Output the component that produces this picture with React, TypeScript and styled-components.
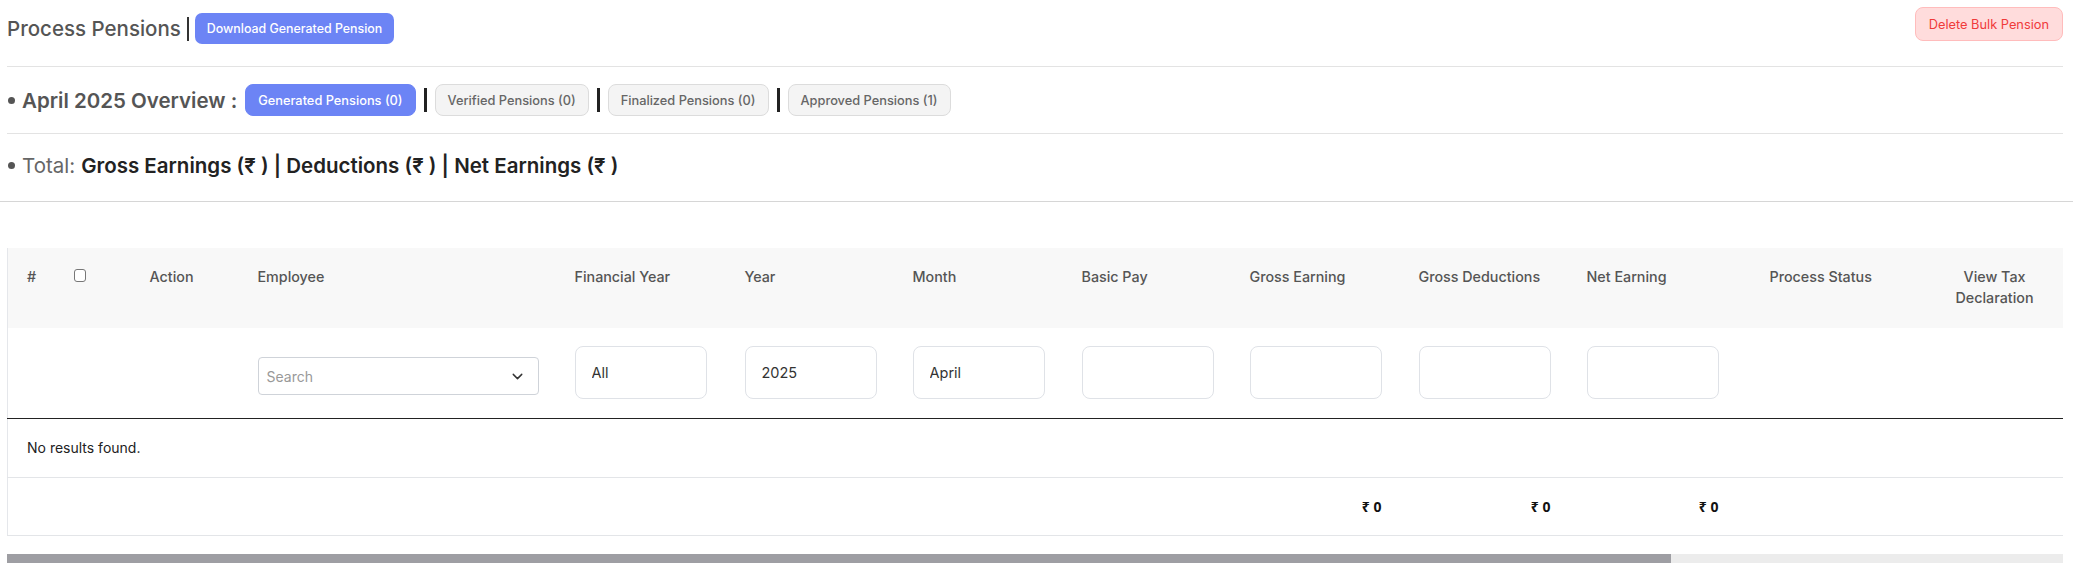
import React from "react";
import styled, { createGlobalStyle } from "styled-components";
import { ChevronDown } from "lucide-react";

const Global = createGlobalStyle`
  html, body { margin: 0; padding: 0; background: #fff; }
  body { font-family: Inter, "Noto Sans", "Liberation Sans", sans-serif; color: #222; }
  * { box-sizing: border-box; }
`;

const Page = styled.div`
  padding: 7px 10px 0 7px;
  overflow: hidden;
`;

const TopBar = styled.div`
  display: flex;
  justify-content: space-between;
  align-items: flex-start;
  height: 60px;
  border-bottom: 1px solid #e3e3e3;
`;

const TitleGroup = styled.div`
  display: flex;
  align-items: center;
  margin-top: 6px;
  gap: 6px;
`;

const Title = styled.h1`
  margin: 0;
  font-size: 20.5px;
  font-weight: 500;
  color: #555;
  line-height: 31px;
`;

const Bar = styled.span<{ $w: number; $h: number; $c: string }>`
  display: inline-block;
  width: ${(p) => p.$w}px;
  height: ${(p) => p.$h}px;
  background: ${(p) => p.$c};
  flex: none;
`;

const Dot = styled.span<{ $c: string }>`
  display: inline-block;
  width: 7px;
  height: 7px;
  border-radius: 50%;
  background: ${(p) => p.$c};
  margin: 0 7px 0 1px;
  flex: none;
`;

const PrimaryButton = styled.button<{ $h: number }>`
  height: ${(p) => p.$h}px;
  padding: 0 12px;
  border: none;
  border-radius: 7px;
  background: #6c84f5;
  color: #fff;
  font-family: Inter, "Noto Sans", sans-serif;
  font-size: 12.4px;
  font-weight: 500;
  white-space: nowrap;
`;

const DangerButton = styled.button`
  height: 34px;
  padding: 0 13px;
  border: 1px solid #ffbcbc;
  border-radius: 8px;
  background: #ffdcdc;
  color: #f03a3a;
  font-family: Inter, "Noto Sans", sans-serif;
  font-size: 12.8px;
  font-weight: 400;
`;

const OverviewRow = styled.div`
  display: flex;
  align-items: center;
  gap: 8px;
  height: 67px;
  border-bottom: 1px solid #e3e3e3;
`;

const SectionLabel = styled.span`
  display: inline-flex;
  align-items: center;
  font-size: 20.5px;
  font-weight: 600;
  color: #555;
  white-space: nowrap;
`;

const TabButton = styled.button<{ $active?: boolean }>`
  height: 32px;
  padding: 0 12px;
  border-radius: 8px;
  border: 1px solid ${(p) => (p.$active ? "#6c84f5" : "#dcdcdc")};
  background: ${(p) => (p.$active ? "#6c84f5" : "#f4f4f4")};
  color: ${(p) => (p.$active ? "#fff" : "#666")};
  font-family: Inter, "Noto Sans", sans-serif;
  font-size: 12.8px;
  font-weight: 500;
  white-space: nowrap;
`;

const TotalRow = styled.div`
  display: flex;
  align-items: center;
  height: 68px;
  margin: 0 -10px 0 -7px;
  padding: 0 0 4px 7px;
  border-bottom: 1px solid #d6d6d6;
  font-size: 20.5px;
  white-space: nowrap;
`;

const TotalLabel = styled.span`
  display: inline-flex;
  align-items: center;
  color: #666;
  font-weight: 400;
  margin-right: 6px;
`;

const TotalValue = styled.span`
  color: #222;
  font-weight: 600;
`;

const TableFrame = styled.div`
  margin-top: 46px;
  overflow: hidden;
`;

const Table = styled.table`
  width: 2540px;
  table-layout: fixed;
  border-collapse: collapse;
  border-left: 1px solid #e5e7eb;
`;

const ScrollTrack = styled.div`
  margin-top: 18px;
  height: 9px;
  background: #ececec;
`;

const ScrollThumb = styled.div`
  height: 100%;
  background: #9e9ea3;
`;

const HeadCell = styled.th<{ $center?: boolean }>`
  height: 80px;
  padding: 18px 19px 0;
  vertical-align: top;
  text-align: ${(p) => (p.$center ? "center" : "left")};
  background: #f8f8f8;
  font-size: 14.3px;
  line-height: 21px;
  font-weight: 500;
  color: #555;
`;

const FilterCell = styled.td`
  height: 90px;
  padding: 0 19px;
  vertical-align: middle;
  border-bottom: 1.5px solid #222;
`;

const FilterInput = styled.input`
  width: 132px;
  height: 53px;
  padding: 0 16px;
  border: 1px solid #dfe2e7;
  border-radius: 8px;
  font-family: Inter, "Noto Sans", sans-serif;
  font-size: 14.5px;
  color: #333;
  background: #fff;
  outline: none;
`;

const SelectBox = styled.div`
  width: 281px;
  height: 38px;
  margin-top: 7px;
  padding: 0 12px 0 8px;
  display: flex;
  align-items: center;
  justify-content: space-between;
  border: 1px solid #cfd3d9;
  border-radius: 4px;
  font-size: 14px;
  color: #999;
`;

const Checkbox = styled.span`
  display: inline-block;
  width: 12px;
  height: 13px;
  margin-top: 1px;
  border: 1.3px solid #777;
  border-radius: 3px;
  background: #fff;
`;

const MessageCell = styled.td`
  height: 59px;
  padding: 0 19px;
  font-size: 14px;
  color: #222;
  border-bottom: 1px solid #e3e5e8;
`;

const TotalCell = styled.td`
  height: 58px;
  padding: 0 19px;
  border-bottom: 1px solid #e3e5e8;
`;

const TotalAmount = styled.div`
  width: 132px;
  text-align: right;
  font-family: "Noto Sans", Inter, sans-serif;
  font-size: 14px;
  font-weight: 700;
  color: #111;
`;

const columns: { label: string; width: number; center?: boolean }[] = [
  { label: "#", width: 47 },
  { label: "", width: 76 },
  { label: "Action", width: 108 },
  { label: "Employee", width: 317 },
  { label: "Financial Year", width: 170 },
  { label: "Year", width: 168 },
  { label: "Month", width: 169 },
  { label: "Basic Pay", width: 168 },
  { label: "Gross Earning", width: 169 },
  { label: "Gross Deductions", width: 168 },
  { label: "Net Earning", width: 183 },
  { label: "Process Status", width: 175 },
  { label: "View Tax Declaration", width: 138, center: true },
  { label: "", width: 160 },
  { label: "", width: 160 },
  { label: "", width: 164 },
];

const filters: Record<number, string> = {
  4: "All",
  5: "2025",
  6: "April",
  7: "",
  8: "",
  9: "",
  10: "",
};

const totals: Record<number, string> = { 8: "₹ 0", 9: "₹ 0", 10: "₹ 0" };

const tableWidth = columns.reduce((s, c) => s + c.width, 0);
const visibleWidth = 2056;

export default function App() {
  const thumbPct = Math.min(100, (visibleWidth / tableWidth) * 100);
  return (
    <>
      <Global />
      <Page>
        <TopBar>
          <TitleGroup>
            <Title>Process Pensions</Title>
            <Bar $w={2} $h={24} $c="#333" />
            <PrimaryButton $h={31}>Download Generated Pension</PrimaryButton>
          </TitleGroup>
          <DangerButton>Delete Bulk Pension</DangerButton>
        </TopBar>

        <OverviewRow>
          <SectionLabel>
            <Dot $c="#555" />
            April 2025 Overview :
          </SectionLabel>
          <TabButton $active>Generated Pensions (0)</TabButton>
          <Bar $w={3} $h={24} $c="#222" />
          <TabButton>Verified Pensions (0)</TabButton>
          <Bar $w={3} $h={24} $c="#222" />
          <TabButton>Finalized Pensions (0)</TabButton>
          <Bar $w={3} $h={24} $c="#222" />
          <TabButton>Approved Pensions (1)</TabButton>
        </OverviewRow>

        <TotalRow>
          <TotalLabel>
            <Dot $c="#555" />
            Total:
          </TotalLabel>
          <TotalValue>Gross Earnings (₹ ) | Deductions (₹ ) | Net Earnings (₹ )</TotalValue>
        </TotalRow>

        <TableFrame>
          <Table>
            <colgroup>
              {columns.map((c, i) => (
                <col key={i} style={{ width: c.width }} />
              ))}
            </colgroup>
            <thead>
              <tr>
                {columns.map((c, i) => (
                  <HeadCell key={i} $center={c.center}>
                    {i === 1 ? <Checkbox /> : c.label}
                  </HeadCell>
                ))}
              </tr>
              <tr>
                {columns.map((_, i) => (
                  <FilterCell key={i}>
                    {i === 3 ? (
                      <SelectBox>
                        <span>Search</span>
                        <ChevronDown size={17} color="#333" strokeWidth={2} />
                      </SelectBox>
                    ) : filters[i] !== undefined ? (
                      <FilterInput readOnly value={filters[i]} />
                    ) : null}
                  </FilterCell>
                ))}
              </tr>
            </thead>
            <tbody>
              <tr>
                <MessageCell colSpan={columns.length}>No results found.</MessageCell>
              </tr>
              <tr>
                {columns.map((_, i) => (
                  <TotalCell key={i}>
                    {totals[i] ? <TotalAmount>{totals[i]}</TotalAmount> : null}
                  </TotalCell>
                ))}
              </tr>
            </tbody>
          </Table>
        </TableFrame>
        <ScrollTrack>
          <ScrollThumb style={{ width: `${thumbPct}%` }} />
        </ScrollTrack>
      </Page>
    </>
  );
}
